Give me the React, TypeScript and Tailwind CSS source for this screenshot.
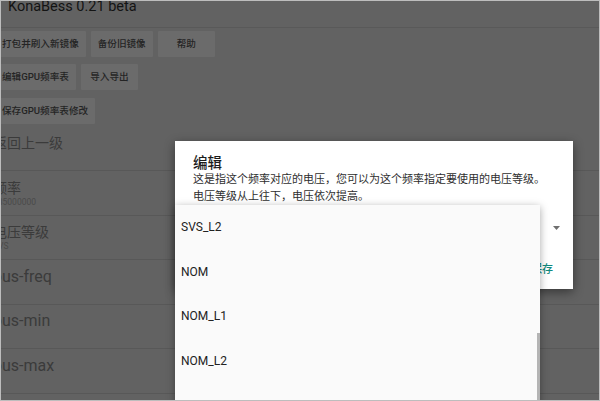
import React from "react";

const btn =
  "h-[26px] min-w-[57px] px-[7px] bg-[#6b6b6b] text-[#242424] text-[9.6px] font-medium flex items-center justify-center whitespace-nowrap rounded-[1px]";

function Row({ title, sub, latin }: { title: string; sub?: string; latin?: boolean }) {
  return (
    <div className="h-[44.5px] border-b border-[#585858] flex flex-col justify-center pl-[6px]">
      <div
        className={
          (latin ? "text-[16px] " : "text-[14px] ") +
          "leading-[18px] text-[#3b3b3b] whitespace-nowrap"
        }
      >
        {title}
      </div>
      <div className="h-[10px] text-[8.5px] leading-[10px] text-[#4a4a4a]">{sub ?? ""}</div>
    </div>
  );
}

export default function App() {
  return (
    <div className="relative w-[600px] h-[401px] overflow-hidden bg-[#626262] font-['Roboto','Noto_Sans_CJK_SC',sans-serif]">
      {/* dimmed app */}
      <div className="h-[30px] border-b border-[#595959] pl-[8px]">
        <div className="mt-[-2px] text-[14.5px] leading-[18px] text-[#141414]">KonaBess 0.21 beta</div>
      </div>
      <div className="ml-[-13px]">
        <div className="flex flex-col pl-[8px] mt-[3px]">
          <div className="flex gap-[5px]">
            <div className={btn}>打包并刷入新镜像</div>
            <div className={btn}>备份旧镜像</div>
            <div className={btn}>帮助</div>
          </div>
          <div className="flex gap-[5px] mt-[7px]">
            <div className={btn}>编辑GPU频率表</div>
            <div className={btn}>导入导出</div>
          </div>
          <div className="flex gap-[5px] mt-[8px]">
            <div className={btn}>保存GPU频率表修改</div>
          </div>
        </div>
        <div className="mt-[2.5px] w-[630px]">
          <Row title="返回上一级" />
          <Row title="频率" sub="585000000" />
          <Row title="电压等级" sub="SVS" />
          <Row title="bus-freq" latin />
          <Row title="bus-min" latin />
          <Row title="bus-max" latin />
        </div>
      </div>

      {/* dialog */}
      <div className="absolute left-[175px] top-[141px] w-[398px] h-[148px] bg-white shadow-[0_3px_10px_rgba(0,0,0,0.45)]">
        <div className="pl-[18px] pt-[15px]">
          <div className="text-[14.5px] leading-[16px] text-[#1c1c1c] font-medium">编辑</div>
          <div className="mt-[-1px] text-[11px] leading-[17px] text-[#2e2e2e]">
            这是指这个频率对应的电压，您可以为这个频率指定要使用的电压等级。
            <br />
            电压等级从上往下，电压依次提高。
          </div>
        </div>
        <svg className="absolute left-[378px] top-[85px]" width="7" height="4" viewBox="0 0 7 4">
          <path d="M0 0 L7 0 L3.5 4 Z" fill="#6f6f6f" />
        </svg>
        <div className="absolute right-[20px] top-[122px] text-[11px] leading-[14px] font-medium text-[#12897d]">
          保存
        </div>
      </div>

      {/* dropdown popup */}
      <div className="absolute left-[175px] top-[205px] w-[365px] h-[200px] bg-[#fafafa] shadow-[0_2px_8px_rgba(0,0,0,0.35)]">
        {["SVS_L2", "NOM", "NOM_L1", "NOM_L2", "TURBO"].map((t) => (
          <div key={t} className="h-[44.5px] flex items-center pl-[6px] text-[12px] text-[#222222]">
            {t}
          </div>
        ))}
        <div className="absolute right-[0px] top-[128px] w-[3px] h-[80px] bg-[#b4b4b4]" />
      </div>

      {/* frame */}
      <div className="absolute inset-0 border border-[#bdbdbd] pointer-events-none" />
    </div>
  );
}
